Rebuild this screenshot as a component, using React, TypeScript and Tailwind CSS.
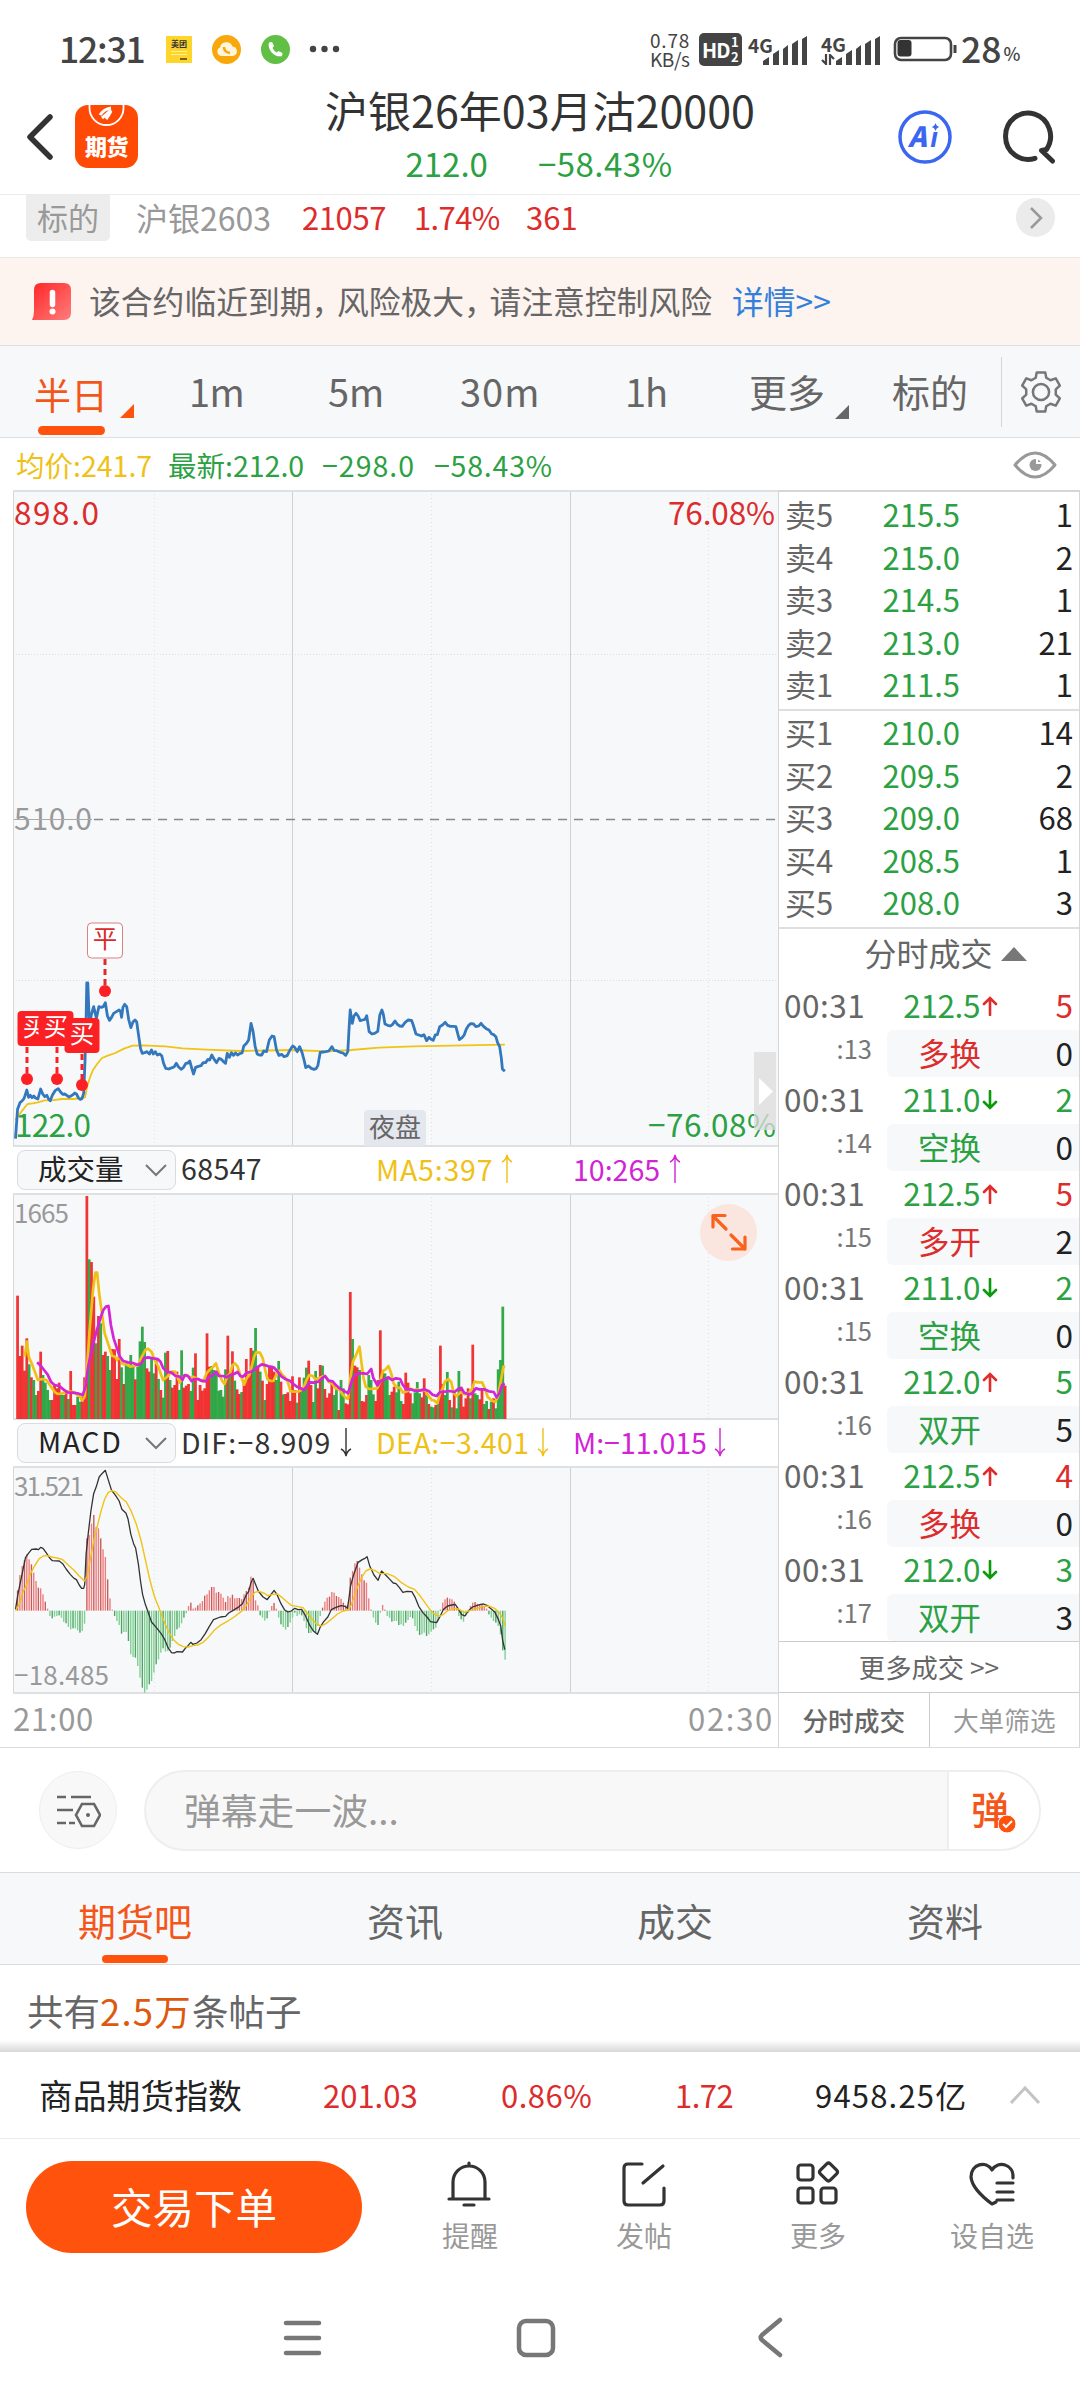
import React from "react";

type Trade = [sec: string, price: string, dir: "up" | "down", qty: string, kind: string, delta: string];

const ASKS = [["卖5", "215.5", "1"], ["卖4", "215.0", "2"], ["卖3", "214.5", "1"], ["卖2", "213.0", "21"], ["卖1", "211.5", "1"]];
const BIDS = [["买1", "210.0", "14"], ["买2", "209.5", "2"], ["买3", "209.0", "68"], ["买4", "208.5", "1"], ["买5", "208.0", "3"]];

const TRADES: Trade[] = [
  [":13", "212.5", "up", "5", "多换", "0"],
  [":14", "211.0", "down", "2", "空换", "0"],
  [":15", "212.5", "up", "5", "多开", "2"],
  [":15", "211.0", "down", "2", "空换", "0"],
  [":16", "212.0", "up", "5", "双开", "5"],
  [":16", "212.5", "up", "4", "多换", "0"],
  [":17", "212.0", "down", "3", "双开", "3"],
];
const QTY_RED = [true, false, true, false, false, true, false];

// Top edge of each one-minute volume bar; the letter is its colour.
const VOLUME =
  "347R 528R 497R 572R 475R 553G 592R 600G 645G 633R 515R 585G 608G 630G 660G 660R 618R 625R 608R 645G 645G 640R 657G 573R 675R 675R 650G 665G 650R 592R 48R 238G 246R 350R 490G 408R 430G 525R 515R 528G 570G 507R 508R 597R 477R 562G 612R 550G 560G 525G 560G 598R 560G 484G 440G 486G 565R 575R 535G 580G 535R 597G 630R 653G 518G 513R 600G 623R 615R 575R 630G 511G 623R 617R 612R 633G 563G 520R 660R 615R 632R 625R 460R 560R 558G 570G 575G 632G 630G 650G 568G 467R 575G 514R 602G 628R 642R 636G 600R 537R 590R 504R 512G 444G 560R 575G 602R 660G 612R 557R 557R 575R 600G 543G 605R 643G 642R 637R 663R 589R 630R 668G 592R 630G 593G 563G 542R 615R 666G 573G 625R 555R 557G 627R 653R 640R 602R 645G 625G 690R 600G 625G 670R 673R 336R 477G 557R 562R 570G 663R 665R 645R 585G 600G 643G 663R 600R 451R 570R 580G 590G 645G 635R 620R 637G 605G 663G 672R 578R 608R 640R 670G 637G 606G 640G 652R 595R 645G 672R 680G 682G 675R 670G 497R 612R 645G 576G 660R 682G 640R 685G 573G 620R 680R 655R 625R 655G 494R 640G 645G 658R 625R 672G 663G 687R 665G 655R 685G 568G 540G 380G 617R".split(" ");

// Free end of each MACD histogram bar; 569 is the zero axis.
const MACD = [
  508, 462, 435, 417, 400, 415, 430, 455, 480, 500, 502, 520, 542, 563, 585, 592, 587, 585, 583, 590, 603, 607, 618, 625, 622, 622, 628, 635, 630, 608,
  352, 342, 308, 282, 318, 322, 352, 385, 408, 475, 532, 566, 585, 600, 612, 638, 633, 633, 660, 700, 708, 710, 735, 770, 800, 815, 806, 790, 780, 755,
  730, 715, 695, 682, 692, 690, 680, 660, 645, 625, 620, 607, 590, 577, 555, 545, 563, 560, 553, 547, 540, 524, 520, 508, 498, 498, 515, 513, 518, 530,
  543, 525, 530, 521, 532, 531, 531, 534, 520, 510, 500, 467, 480, 538, 553, 583, 590, 599, 592, 572, 555, 546, 563, 590, 610, 618, 626, 618, 605, 590,
  575, 585, 580, 583, 600, 622, 636, 636, 630, 635, 615, 585, 560, 542, 530, 527, 513, 515, 525, 528, 533, 545, 553, 550, 470, 450, 427, 420, 440, 460,
  478, 485, 532, 566, 590, 605, 612, 575, 552, 566, 585, 590, 602, 600, 600, 612, 610, 615, 605, 597, 588, 592, 615, 630, 642, 640, 635, 645, 640, 632,
  625, 620, 598, 566, 545, 535, 530, 533, 535, 542, 560, 585, 595, 602, 585, 575, 555, 545, 543, 548, 550, 552, 555, 563, 580, 590, 600, 605, 615, 640,
  688, 716,
];

const PRICE =
  "45,716 51,628 58,608 64,603 70,595 78,570 83,592 88,586 93,593 98,588 103,594 110,597 118,567 124,582 130,590 136,586 141,597 146,602 152,586 160,572 169,566 176,576 182,583 188,582 194,586 200,591 206,588 212,584 217,579 222,582 228,594 233,598 238,596 243,580 247,480 250,360 252,249 255,249 260,385 265,345 272,320 280,355 287,320 294,322 300,320 306,308 312,348 318,361 324,352 330,340 338,335 346,330 350,334 353,352 357,322 362,313 368,320 374,360 380,383 386,366 392,360 397,366 403,410 408,445 413,460 420,458 426,455 434,462 440,450 445,462 451,455 457,465 464,462 470,468 475,490 481,505 490,507 500,503 506,500 512,490 518,500 526,508 533,502 540,490 546,489 551,483 557,505 562,522 568,502 576,499 584,497 590,488 597,488 604,478 609,480 615,465 622,478 629,488 636,475 643,478 650,486 655,490 660,460 666,472 672,458 678,466 684,459 690,465 696,461 703,459 708,438 716,430 722,420 729,370 735,395 741,440 747,462 753,465 760,465 766,453 774,455 782,420 790,408 796,410 803,450 810,466 818,463 825,470 834,467 842,450 850,438 856,442 863,455 870,440 877,457 883,480 888,503 896,498 904,505 912,508 918,506 923,497 930,457 938,456 946,455 955,453 964,440 970,451 978,452 988,457 996,459 1004,466 1010,455 1014,380 1017,330 1023,370 1028,348 1034,340 1040,348 1046,362 1053,360 1060,358 1065,347 1072,395 1080,402 1088,400 1097,394 1103,345 1109,330 1113,342 1118,372 1126,376 1134,378 1140,373 1147,363 1154,373 1161,378 1168,379 1176,368 1185,360 1195,361 1200,375 1208,402 1216,405 1224,408 1231,404 1239,422 1246,412 1252,418 1258,421 1264,405 1270,404 1277,380 1285,375 1293,367 1300,376 1308,379 1316,379 1324,380 1329,400 1334,419 1342,413 1348,405 1354,388 1361,376 1367,371 1375,372 1382,380 1390,378 1397,370 1404,379 1412,386 1420,390 1428,402 1434,404 1440,410 1445,428 1451,440 1456,475 1459,507 1466,514";
const AVERAGE =
  "45,660 55,645 65,631 80,612 95,610 110,607 130,601 150,601 180,597 215,597 247,592 253,560 262,530 270,510 282,492 296,474 315,466 335,459 360,446 385,437 415,436 480,439 530,445 600,449 700,453 850,450 950,454 1020,450 1100,443 1200,439 1350,436 1466,434";
const VOL_MA5 =
  "72,530 78,485 84,532 92,550 100,572 110,600 122,597 135,600 148,620 160,637 168,642 182,640 192,634 205,635 215,636 225,645 232,650 239,662 246,650 253,560 260,455 270,330 277,278 282,278 288,340 296,400 304,460 312,485 320,510 326,528 334,530 340,540 347,528 356,552 368,553 378,560 390,558 400,555 412,530 422,510 430,506 440,515 450,542 460,560 468,585 474,600 486,590 498,575 508,575 515,590 522,608 530,592 542,585 552,594 560,590 570,595 580,600 590,605 600,580 608,570 618,562 627,550 636,580 645,602 652,612 660,590 668,580 675,556 682,550 690,560 698,585 704,600 709,614 716,595 724,585 732,555 738,530 744,517 755,518 763,535 770,570 777,598 786,603 794,603 802,585 812,572 820,585 828,592 836,606 844,634 856,635 868,634 880,628 890,600 898,585 908,588 916,598 926,595 936,590 944,588 954,605 964,610 974,625 985,628 996,645 1006,655 1011,656 1018,590 1025,545 1034,525 1044,500 1050,550 1056,595 1062,620 1072,627 1084,626 1096,625 1104,605 1112,573 1120,568 1128,558 1136,580 1143,610 1152,622 1162,624 1170,638 1182,634 1192,626 1202,630 1212,628 1222,632 1234,630 1244,648 1254,660 1262,662 1270,670 1278,640 1286,625 1292,605 1302,597 1310,605 1318,640 1326,648 1338,637 1350,643 1362,638 1370,628 1378,605 1388,607 1400,607 1408,625 1416,650 1426,660 1438,666 1446,650 1455,600 1462,560 1467,560";
const VOL_MA10 =
  "108,547 118,557 128,570 138,583 148,605 158,615 172,618 184,628 196,637 210,638 225,640 240,645 248,622 256,560 264,520 272,485 280,455 290,420 300,390 308,380 315,378 322,435 330,475 338,500 348,530 358,543 372,547 386,549 400,555 410,550 418,535 430,532 445,535 458,537 466,545 474,565 485,575 498,578 510,588 522,590 530,600 536,585 546,588 556,603 566,597 575,597 585,602 598,604 606,592 618,586 628,575 636,588 648,588 658,592 668,585 680,582 690,576 698,588 706,590 716,578 728,576 738,570 750,560 760,553 772,556 782,560 796,563 806,575 818,590 830,598 842,602 852,612 862,620 872,624 882,630 892,618 900,607 912,608 924,605 934,596 944,588 954,602 966,604 976,616 986,625 998,632 1011,640 1018,615 1024,595 1034,583 1044,580 1056,580 1066,582 1078,567 1084,594 1096,616 1106,602 1118,598 1128,592 1138,600 1150,595 1162,597 1170,615 1180,628 1192,628 1204,632 1218,632 1232,628 1246,634 1256,644 1268,648 1278,636 1292,635 1306,633 1320,636 1332,626 1340,625 1348,638 1362,643 1372,640 1382,625 1392,628 1406,628 1420,634 1434,636 1442,652 1450,640 1458,615 1466,612";
const DIF =
  "45,565 52,520 60,480 68,440 74,410 82,398 92,385 105,384 112,386 118,379 125,382 134,395 145,412 152,419 172,420 182,428 192,444 204,460 215,472 222,476 230,492 237,502 243,502 246,490 250,400 256,340 264,270 272,218 280,196 288,168 296,158 306,148 314,175 324,208 336,224 346,240 354,265 366,277 372,295 380,340 388,368 394,382 402,430 408,480 414,520 422,550 430,573 440,603 456,622 468,638 478,655 488,680 498,695 506,696 514,692 530,693 538,682 546,674 554,664 560,670 572,666 584,656 596,638 608,616 620,596 640,588 655,586 664,576 676,569 690,560 704,548 716,520 722,512 729,485 735,472 742,490 750,510 764,528 776,536 786,522 796,508 804,520 816,548 826,566 836,573 846,570 856,562 866,566 876,565 886,582 898,610 910,630 922,640 930,618 940,602 952,588 962,566 974,560 990,554 1002,556 1009,562 1013,535 1018,495 1028,458 1040,424 1052,416 1060,412 1066,407 1074,436 1086,462 1098,478 1108,450 1120,462 1132,475 1142,486 1150,488 1160,500 1170,514 1182,511 1196,512 1206,530 1216,556 1228,575 1240,588 1250,602 1268,605 1276,590 1288,565 1300,555 1312,552 1322,550 1330,562 1340,580 1350,585 1360,570 1372,558 1384,554 1396,550 1404,549 1416,554 1424,562 1436,572 1446,592 1454,614 1460,660 1466,686";
const DEA =
  "45,569 56,550 66,515 78,490 90,455 102,432 114,413 126,405 138,404 150,408 166,411 182,416 198,432 215,448 230,465 245,480 254,465 264,405 274,350 284,310 294,268 304,234 314,215 324,209 336,213 352,230 366,242 380,268 396,310 410,360 424,425 436,480 448,525 462,562 476,600 490,634 504,656 518,670 532,677 546,678 560,674 574,672 590,664 606,648 622,628 638,614 660,601 680,588 700,572 714,556 728,530 740,514 752,511 766,516 778,524 792,520 806,519 820,530 834,543 846,553 862,556 880,560 892,576 906,594 920,610 934,615 948,607 964,593 980,579 996,570 1012,567 1020,552 1028,528 1038,498 1050,470 1062,450 1074,444 1088,448 1104,458 1124,458 1146,467 1166,485 1186,498 1204,505 1218,522 1232,542 1248,565 1262,580 1276,586 1288,580 1302,568 1318,562 1332,564 1348,574 1364,569 1382,564 1400,556 1420,555 1436,562 1450,575 1460,592 1467,614";

const SX = 0.34435;
const SY = 1 / 3;

function Grid({ h, rows = [] as number[] }: { h: number; rows?: number[] }) {
  return (
    <g fill="none" shapeRendering="crispEdges">
      <rect x="0" y="0" width="765" height={h} fill="#f7f8fa" />
      {[141, 418, 695].map((x) => <path key={x} d={`M${x} 0V${h}`} stroke="#e0e1e3" strokeDasharray="1 3" />)}
      {rows.map((y) => <path key={y} d={`M0 ${y}H765`} stroke="#dcdddf" strokeDasharray="1 2" />)}
      {[279.5, 557].map((x) => <path key={x} d={`M${x} 0V${h}`} stroke="#cfd0d2" />)}
      <path d={`M0.5 0V${h}`} stroke="#d6d7d9" />
      <path d={`M0 1H765 M0 ${h - 1}H765`} stroke="#dfe0e1" strokeWidth="2" />
    </g>
  );
}

function Line({ points, color, w }: { points: string; color: string; w: number }) {
  return <polyline points={points} fill="none" stroke={color} strokeWidth={w} strokeLinejoin="round" vectorEffect="non-scaling-stroke" />;
}

function Marker({ x, box = x, top, dot, label, hollow }: { x: number; box?: number; top: number; dot: number; label: string; hollow?: boolean }) {
  return (
    <g>
      <path d={`M${x} ${top + 36}V${dot}`} stroke={hollow ? "#e02b2b" : "#fb2024"} strokeWidth="3" strokeDasharray="6 4" />
      <circle cx={x} cy={dot} r="6" fill="#fb2024" />
      <rect x={box - 17.5} y={top} width="35" height="35" rx="4" fill={hollow ? "#fff" : "#fb2024"} stroke={hollow ? "#d98080" : "none"} />
      <text x={box} y={top + 25} textAnchor="middle" fontSize="24.500" fill={hollow ? "#d92b2b" : "#fff"}>{label}</text>
    </g>
  );
}

function PriceChart() {
  return (
    <svg width="765" height="657" className="block overflow-visible">
      <Grid h={657} rows={[164, 490]} />
      <path d="M81 329.5H765" stroke="#888" strokeWidth="1.4" strokeDasharray="9 7" />
      <text x="1" y="340" fontSize="30" fill="#999" textLength="78">510.0</text>
      <path d="M1 329.5H79" stroke="#aaa" strokeWidth="1.2" />
      <rect x="351" y="620" width="62" height="36" rx="4" fill="#e4e7ee" />
      <text x="356" y="647" fontSize="26" fill="#666">夜盘</text>
      <g transform={`translate(-13 410) scale(${SX} ${SY})`}>
        <Line points={AVERAGE} color="#f0c314" w={1.8} />
        <Line points={PRICE} color="#3377bd" w={2.8} />
      </g>
      <text x="1" y="35" fontSize="31.500" fill="#dc2c2c" textLength="85">898.0</text>
      <text x="655" y="35" fontSize="31.500" fill="#dc2c2c" textLength="107">76.08%</text>
      <text x="2" y="647" fontSize="31.500" fill="#2ba143" textLength="76">122.0</text>
      <text x="635" y="647" fontSize="31.500" fill="#2ba143" textLength="128">−76.08%</text>
      <Marker x={14} box={22} top={521} dot={589} label="买" />
      <Marker x={44} box={43} top={521} dot={589} label="买" />
      <Marker x={69} top={528} dot={595} label="买" />
      <Marker x={92} top={433} dot={501} label="平" hollow />
      <rect x="741" y="562" width="22" height="78" fill="#dcdcdc" fillOpacity="0.75" />
      <path d="M746 588v27l14-13.500z" fill="#fff" />
    </svg>
  );
}

function VolumeChart() {
  return (
    <svg width="765" height="227" className="block overflow-visible">
      <Grid h={227} />
      <text x="1" y="30" fontSize="26" fill="#999" textLength="55">1665</text>
      <g transform={`translate(-13 -13) scale(${SX} ${SY})`}>
        {VOLUME.map((v, i) => {
          const y = parseInt(v, 10);
          return <rect key={i} x={47 + 6.71 * i} y={y} width="8" height={717 - y} fill={v.endsWith("R") ? "#f02626" : "#24a23c"} fillOpacity="0.93" />;
        })}
        <Line points={VOL_MA5} color="#efc116" w={2.7} />
        <Line points={VOL_MA10} color="#d224d8" w={2.7} />
      </g>
      <circle cx="715.500" cy="39.500" r="28.500" fill="#fae5df" />
      <g stroke="#f9611c" strokeWidth="3.200" fill="none" strokeLinecap="round" strokeLinejoin="round">
        <path d="M713 36L700 23M712 22.500H700V34M718 42L732 56M719.500 56H732V44" />
      </g>
    </svg>
  );
}

function MacdChart() {
  return (
    <svg width="765" height="228" className="block overflow-visible">
      <Grid h={228} />
      <text x="1" y="30" fontSize="26" fill="#999" textLength="70">31.521</text>
      <text x="1" y="219" fontSize="26" fill="#999" textLength="95">−18.485</text>
      <g transform={`translate(-13 -45) scale(${SX} ${SY})`}>
        {MACD.map((y, i) => (
          <rect key={i} x={49 + 6.71 * i} y={Math.min(y, 569)} width="4" height={Math.abs(y - 569)} fill={y < 569 ? (i % 3 ? "#ee7b7b" : "#c95a5a") : i % 3 ? "#7fcf92" : "#4ba562"} />
        ))}
        <Line points={DIF} color="#333" w={1.3} />
        <Line points={DEA} color="#f0c314" w={1.4} />
      </g>
    </svg>
  );
}

function LongArrow({ down }: { down?: boolean }) {
  return (
    <svg width="12" height="30" viewBox="0 0 12 30" fill="none" stroke="currentColor" strokeWidth="1.400" className={down ? "rotate-180" : ""}>
      <path d="M6 29V2M1 8Q5 6 6 1Q7 6 11 8" />
    </svg>
  );
}

function Picker({ label, className }: { label: string; className: string }) {
  return (
    <div className="ml-[4px] flex h-[40px] w-[159px] items-center justify-between rounded-[8px] border border-[#d9dbe0] bg-[#f7f8fa] pr-[8px] pl-[20px] leading-[38px] text-[#222]">
      <span className={className}>{label}</span>
      <svg width="22" height="14" fill="none" stroke="#777" strokeWidth="2"><path d="M1 2l10 10L21 2" /></svg>
    </div>
  );
}

function Book({ rows, pad }: { rows: string[][]; pad: string }) {
  return (
    <div className={`border-b-2 border-[#dfdfdf] ${pad}`}>
      {rows.map(([n, p, q]) => (
        <div key={n} className="flex h-[42.500px] items-center pr-[6px] pb-[4px] pl-[6px] text-[30px] leading-[38px]">
          <span className="w-[55px] text-[31px] text-[#666]">{n}</span>
          <span className="w-[120px] text-right text-[31px] text-[#2ba143]">{p}</span>
          <span className="flex-1 text-right text-[31px] text-[#222]">{q}</span>
        </div>
      ))}
    </div>
  );
}

function TradeRow({ t, i }: { t: Trade; i: number }) {
  const [sec, price, dir, qty, kind, delta] = t;
  const up = dir === "up";
  return (
    <div>
      <div className="flex h-[47px] items-center pr-[6px] pb-[5px] pl-[5px] text-[31.500px] leading-[42px]">
        <span className="w-[82px] tracking-[0.5px] text-[#666]">00:31</span>
        <span className="w-[114px] text-right tracking-[-0.4px] text-[#2ba143]">{price}</span>
        <svg width="16" height="20" viewBox="0 0 16 20" fill="none" stroke={up ? "#e02b2b" : "#0b9a0b"} strokeWidth="2.600" className={up ? "mt-[3px] ml-[2px]" : "mt-[3px] ml-[2px] rotate-180"}>
          <path d="M8 19V3M2 8l6-6 6 6" strokeLinecap="round" />
        </svg>
        <span className={`flex-1 text-right ${QTY_RED[i] ? "text-[#dc2c2c]" : "text-[#2ba143]"}`}>{qty}</span>
      </div>
      <div className="flex h-[47px]">
        <span className="w-[108px] pr-[15px] text-right text-[25.500px] leading-[35px] text-[#777]">{sec}</span>
        <div className="flex flex-1 items-center justify-between rounded-l-[6px] bg-[#f7f8fa] pr-[6px] pb-[4px] pl-[31px] text-[31.500px] leading-[42px]">
          <span className={kind.startsWith("多") ? "text-[#dc2c2c]" : "text-[#2ba143]"}>{kind}</span>
          <span className="text-[#222]">{delta}</span>
        </div>
      </div>
    </div>
  );
}

function Signal() {
  return (
    <svg width="44" height="29" fill="#444">
      <path d="M0 28V25L6 21V29H0zM10 18l6-4V29H10zM20 13l5-4V29H20zM29 8l6-4V29H29zM39 3l5-3V29H39z" />
    </svg>
  );
}

function StatusBar() {
  return (
    <div className="flex h-[98px] items-center pl-[59px] text-[#444]">
      <span className="w-[107px] pb-[3px] text-[35.500px] font-medium tracking-[-1.200px]">12:31</span>
      <div className="flex h-[27px] w-[26px] flex-col items-center bg-[#fed52b] pt-[2px] text-[8px] leading-[12px] font-bold text-[#333]">
        美团
        <span className="mt-px h-px w-[16px] bg-[#fff0a0]" />
        <span className="mt-[2px] h-px w-[16px] bg-[#fff0a0]" />
        <span className="mt-[3px] ml-[9px] h-[2px] w-[7px] bg-[#7a6414]" />
      </div>
      <svg width="29" height="29" viewBox="0 0 29 29" className="ml-[20px]">
        <circle cx="14.500" cy="14.500" r="14.500" fill="#f9a80c" />
        <path d="M9 21a4.500 4.500 0 0 1-1-8.500 6.500 6.500 0 0 1 12.500-1A4.800 4.800 0 0 1 21 21z" fill="#fff5dc" />
        <path d="M12 12q0 5 6 6" stroke="#f9a80c" strokeWidth="2.500" fill="none" />
      </svg>
      <svg width="29" height="29" viewBox="0 0 29 29" className="ml-[20px]">
        <circle cx="14.500" cy="14.500" r="14.500" fill="#62bf45" />
        <path d="M8 7.500l3-.5 2 4-1.500 2q1.500 3 4 4.500l2-1.500 4 2-.5 3.200q-6.500 1-10.500-4T8 7.500z" fill="#fff" />
      </svg>
      <svg width="31" height="8" className="ml-[19px]" fill="#444"><circle cx="4" cy="4" r="3.200" /><circle cx="15.500" cy="4" r="3.200" /><circle cx="27" cy="4" r="3.200" /></svg>
      <div className="ml-[310px] w-[49px] text-[19px] leading-[19px]">
        <div className="tracking-[0.8px]">0.78</div>
        <div className="tracking-[-0.4px]">KB/s</div>
      </div>
      <div className="flex h-[33px] w-[43px] items-center rounded-[5px] bg-[#444] pl-[3px] text-white">
        <span className="w-[29px] text-[20px] leading-[33px] font-bold tracking-[-1px]">HD</span>
        <span className="flex flex-col text-[13px] leading-[15px] font-bold"><span>1</span><span>2</span></span>
      </div>
      <div className="ml-[6px] flex items-end">
        <span className="mb-[9px] w-[15px] text-[19px] leading-[22px] font-bold whitespace-nowrap">4G</span>
        <Signal />
      </div>
      <div className="ml-[14px] flex items-end">
        <div className="flex w-[15px] flex-col">
          <span className="text-[19px] leading-[20px] font-bold whitespace-nowrap">4G</span>
          <svg width="14" height="11" fill="none" stroke="#444" strokeWidth="2.200"><path d="M5 0V10L1 6M9 11V1L13 5" /></svg>
        </div>
        <Signal />
      </div>
      <svg width="65" height="27" className="ml-[13px]" fill="none" stroke="#444" strokeWidth="2.600">
        <rect x="2" y="2" width="56" height="22" rx="6" />
        <rect x="4.500" y="4" width="14" height="16.500" rx="3" fill="#333" stroke="none" />
        <path d="M62 9v8" strokeWidth="3" />
      </svg>
      <span className="ml-[3px] pb-[3px] text-[35.500px] font-medium">28</span>
      <span className="mt-[8px] ml-[2px] text-[18px] font-medium">%</span>
    </div>
  );
}

function Header() {
  return (
    <div className="flex h-[97px] items-start border-b border-[#ebebeb]">
      <div className="flex w-[310px] items-center pt-[7px] pl-[26px]">
        <svg width="29" height="48" fill="none" stroke="#333" strokeWidth="5.500" strokeLinecap="round" strokeLinejoin="round" className="mt-[1px]"><path d="M24 4L4 24l20 20" /></svg>
        <div className="ml-[20px] flex h-[63px] w-[63px] flex-col items-center rounded-[13px] bg-[#ff4a05]">
          <svg width="37" height="24" fill="none" stroke="#fff"><path d="M1.500 0v3a17 17 0 0 0 34 0V0" strokeWidth="1.800" /><path d="M12 10q4-6 11-7M14 13q5-4 9-8M18 14q3-4 5-8" strokeWidth="3" /></svg>
          <span className="text-[22px] leading-[32px] font-black tracking-[-0.5px] text-white">期货</span>
        </div>
      </div>
      <div className="flex w-[460px] flex-col items-center">
        <h1 className="h-[44px] text-[43px] leading-[22px] whitespace-nowrap text-[#333]">沪银26年03月沽20000</h1>
        <div className="flex h-[46px] gap-[50px] pr-[2px] text-[33px] leading-[42px] text-[#2ba143]"><span>212.0</span><span className="tracking-[0.500px]">−58.43%</span></div>
      </div>
      <div className="ml-[128px] flex items-center pt-[12px]">
        <svg width="54" height="54" viewBox="0 0 54 54">
          <circle cx="27" cy="27" r="25" fill="none" stroke="#3b66f0" strokeWidth="3.500" />
          <text x="10" y="37" fontSize="28" fontWeight="900" fontStyle="italic" fill="#3b66f0" textLength="30">Aı</text>
          <path d="M37.500 13q1 3.500 4 4-3 .5-4 4-1-3.500-4-4 3-.5 4-4z" fill="#3b66f0" />
        </svg>
        <svg width="54" height="54" className="ml-[51px]" fill="none" stroke="#333" strokeWidth="5" strokeLinecap="round" strokeLinejoin="round">
          <path d="M32 48.300A22.500 23.200 0 1 1 43.500 39.500L38.500 40.500L49.500 51" />
        </svg>
      </div>
    </div>
  );
}

function GearIcon() {
  return (
    <svg width="40" height="42" viewBox="0 0 42 44" fill="none" stroke="#777" strokeWidth="2.600" strokeLinejoin="round">
      <path d="M16.500 1.500h9l1 5.500 4.500 2.700 5.500-2 4.300 7.500-4.300 4v5.600l4.300 4-4.300 7.500-5.500-2-4.500 2.700-1 5.500h-9l-1-5.500-4.500-2.700-5.500 2L1.200 28.800l4.300-4v-5.600l-4.300-4L5.500 7.700l5.500 2L15.500 7z" />
      <circle cx="21" cy="22" r="8.500" />
    </svg>
  );
}

function PeriodTabs() {
  return (
    <div className="flex h-[93px] items-center border-y border-[#dddee2] bg-[#f7f8fa] text-[38px] text-[#666]">
      <div className="flex h-full w-[189px] pl-[34px]">
        <div className="flex w-[74px] flex-col items-center justify-end pb-[2px] text-[#f4561a]">
          <span className="mb-[4px] text-[37px] leading-[56px]">半日</span>
          <span className="h-[9px] w-[67px] rounded-full bg-[#ff530d]" />
        </div>
        <svg width="14" height="14" className="mt-[58px] ml-[12px]"><path d="M14 0V14H0z" fill="#ff530d" /></svg>
      </div>
      <span className="w-[139px] pb-[2px] tracking-[-0.5px]">1m</span>
      <span className="w-[132px] pb-[2px]">5m</span>
      <span className="w-[165px] pb-[2px] tracking-[1px]">30m</span>
      <span className="w-[124px] pb-[2px] tracking-[-1px]">1h</span>
      <span className="w-[86px] pb-[2px]">更多</span>
      <svg width="14" height="14" className="mt-[40px]"><path d="M14 0V14H0z" fill="#666" /></svg>
      <span className="ml-[43px] w-[109px] pb-[2px]">标的</span>
      <span className="mr-[19px] h-[70px] w-px bg-[#d5d6d9]" />
      <GearIcon />
    </div>
  );
}

function ChatRow() {
  return (
    <div className="flex h-[125px] items-center border-b border-[#dcdcdc] pl-[39px]">
      <div className="flex size-[78px] items-center justify-center rounded-full border border-[#eee] bg-[#f8f8f8]">
        <svg width="46" height="36" fill="none" stroke="#666" strokeWidth="2.600">
          <path d="M2 5h9M16 5h20M2 18h16M2 31h9M14 31h6M27 12h12l6 11-6 11H27l-6-11z" />
          <circle cx="33" cy="23" r="2" fill="#666" stroke="none" />
        </svg>
      </div>
      <div className="ml-[27px] flex h-[81px] w-[897px] overflow-hidden rounded-full border-2 border-[#eee] bg-[#f8f8f8]">
        <span className="w-[801px] pl-[38px] text-[36.800px] leading-[74px] text-[#999]">弹幕走一波...</span>
        <div className="flex flex-1 items-center border-l-2 border-[#eee] bg-white pb-[4px] pl-[22px]">
          <div className="relative text-[38px] leading-[44px] font-medium text-[#f4561a]">
            弹
            <svg width="18" height="18" className="absolute right-[-7px] bottom-[-3px]"><circle cx="9" cy="9" r="9" fill="#ff530d" stroke="#fff" /><path d="M5 9l3 3 6-6" fill="none" stroke="#fff" strokeWidth="2" /></svg>
          </div>
        </div>
      </div>
    </div>
  );
}

const ICONS: [string, React.ReactNode][] = [
  ["提醒", <path d="M22 2v3M6 38V21a16 16 0 0 1 32 0V38M2 38h40M17 44h10" />],
  ["发帖", <path d="M21 3H7q-4 0-4 4v33q0 4 4 4h32q4 0 4-4V27M22 22L42 5" />],
  ["更多", <><rect x="3" y="4" width="15" height="15" rx="3" /><rect x="3" y="27" width="15" height="15" rx="3" /><rect x="26" y="27" width="15" height="15" rx="3" /><rect x="26.500" y="4" width="14" height="14" rx="2.500" transform="rotate(45 33.500 11)" /></>],
  ["设自选", <path d="M27 41l-4 2Q3 28 2 16C2 3 17-1 23 9c6-10 22-6 21 8M28 22h16M28 31h16M28 39h16" strokeLinejoin="round" />],
];

export default function App() {
  return (
    <div lang="zh-CN" className="h-[2400px] w-[1080px] overflow-hidden bg-white font-['Noto_Sans_CJK_SC',sans-serif]">
      <StatusBar />
      <Header />

      <div className="flex h-[62px] items-start text-[31px] leading-[44px] text-[#dc2c2c]">
        <span className="ml-[26px] h-[46px] w-[84px] rounded-b-[5px] bg-[#ededed] text-center text-[#999]">标的</span>
        <span className="ml-[26px] w-[166px] text-[32px] text-[#999]">沪银2603</span>
        <span className="w-[112px] tracking-[-0.4px]">21057</span>
        <span className="w-[112px] tracking-[-0.6px]">1.74%</span>
        <span className="w-[490px]">361</span>
        <span className="mt-[3px] flex size-[39px] items-center justify-center rounded-full bg-[#ebebeb]">
          <svg width="14" height="22" fill="none" stroke="#999" strokeWidth="2.500"><path d="M2 1l10 10L2 21" /></svg>
        </span>
      </div>

      <div className="flex h-[88px] items-center border-t border-[#ece6e4] bg-[#fdf3ef] pl-[32px] text-[31.800px] text-[#666]">
        <svg width="39" height="38">
          <defs><linearGradient id="warn" x1="0" y1="0" x2="1" y2="1"><stop stopColor="#ff2525" /><stop offset="1" stopColor="#ff7d7d" /></linearGradient></defs>
          <path d="M2 7q0-7 7-7h23q7 0 7 7v23q0 7-7 7H0q2-4 2-9z" fill="url(#warn)" />
          <path d="M20.500 9.500v12" stroke="#fff" strokeWidth="5.500" strokeLinecap="round" /><circle cx="20.500" cy="28.500" r="3" fill="#fff" />
        </svg>
        <span className="ml-[18px] w-[643px] pb-[1px] whitespace-nowrap">该合约临近到期<span className="tracking-[-6.500px]">，</span>风险极大<span className="tracking-[-6.500px]">，</span>请注意控制风险</span>
        <span className="pb-[1px] text-[#3380dc]">详情&gt;&gt;</span>
      </div>

      <PeriodTabs />

      <div className="flex h-[52px] items-center pl-[16px] text-[28.500px] text-[#2ba143]">
        <span className="w-[152px] pt-[3px] text-[#efc116]">均价:241.7</span>
        <span className="w-[154px] pt-[3px]">最新:212.0</span>
        <span className="w-[112px] pt-[3px] tracking-[1px]">−298.0</span>
        <span className="pt-[3px] tracking-[0.8px]">−58.43%</span>
        <svg width="44" height="28" className="mt-[1px] mr-[23px] ml-auto" fill="none" stroke="#999" strokeWidth="3">
          <path d="M2 14Q22-10 42 14Q22 38 2 14z" strokeLinejoin="round" /><circle cx="22.500" cy="14" r="6" fill="#999" stroke="none" /><path d="M24 7v5h6" stroke="#fff" strokeWidth="2" />
        </svg>
      </div>

      <div className="flex h-[1258px] border-b border-[#dcdcdc]">
        <div className="ml-[13px] w-[765px]">
          <PriceChart />
          <div className="grid h-[46px] grid-cols-[168px_195px_197px_1fr] items-center text-[28.500px] leading-[38px] text-[#333]">
            <Picker label="成交量" className="pb-[4px] text-[28.500px]" />
            <span className="pb-[4px] tracking-[0.4px]">68547</span>
            <span className="flex items-center gap-[8px] pb-[3px] tracking-[0.8px] text-[#efc116]">MA5:397<LongArrow /></span>
            <span className="flex items-center gap-[9px] pb-[3px] text-[#d024d6]">10:265<LongArrow /></span>
          </div>
          <VolumeChart />
          <div className="grid h-[46px] grid-cols-[168px_195px_197px_1fr] items-center text-[28.500px] leading-[38px] text-[#333]">
            <Picker label="MACD" className="pb-[4px] text-[28.500px] tracking-[1.600px]" />
            <span className="flex items-center gap-[8px] pb-[3px] tracking-[1.200px]">DIF:−8.909<LongArrow down /></span>
            <span className="flex items-center gap-[7px] pb-[3px] tracking-[0.500px] text-[#efc116]">DEA:−3.401<LongArrow down /></span>
            <span className="flex items-center gap-[7px] pb-[3px] text-[#d024d6]">M:−11.015<LongArrow down /></span>
          </div>
          <MacdChart />
          <div className="flex h-[53px] items-center justify-between pr-[4px] pb-[4px] text-[31px] text-[#999]"><span className="tracking-[0.700px]">21:00</span><span className="tracking-[1.700px]">02:30</span></div>
        </div>

        <div className="flex h-[1257px] w-[302px] flex-col border-x border-t-2 border-[#d6d6d6]">
          <Book rows={ASKS} pad="h-[219px] pt-[3px]" />
          <Book rows={BIDS} pad="h-[218px] pt-[2px]" />
          <div className="flex h-[54px] items-center justify-center gap-[8px] pb-[8px] pl-[33px] text-[32px] leading-[44px] text-[#666]">
            分时成交
            <svg width="26" height="14" className="mt-[4px]"><path d="M13 0L26 14H0z" fill="#777" /></svg>
          </div>
          {TRADES.map((t, i) => <TradeRow key={i} t={t} i={i} />)}
          <div className="flex h-[52px] items-center justify-center border-y border-[#ccc] pb-[1px] text-[26.300px] text-[#666]">更多成交 &gt;&gt;</div>
          <div className="flex flex-1 items-center text-center text-[25.700px] leading-[54px]">
            <span className="flex-1 border-r border-[#ccc] font-medium text-[#666]">分时成交</span>
            <span className="flex-1 text-[#999]">大单筛选</span>
          </div>
        </div>
      </div>

      <ChatRow />

      <div className="grid h-[92px] grid-cols-4 border-b border-[#dcdcdc] bg-[#f7f8fa] text-center text-[38px] leading-[93px] text-[#666]">
        {["期货吧", "资讯", "成交", "资料"].map((t, i) => (
          <div key={t} className={i === 0 ? "flex flex-col items-center text-[#f4561a]" : ""}>
            {i === 0 ? <><span className="h-[82px]">{t}</span><span className="h-[8px] w-[66px] rounded-full bg-[#ff530d]" /></> : t}
          </div>
        ))}
      </div>

      <div className="h-[75px] pl-[27px] text-[36.500px] leading-[91px] text-[#666]">
        共有<span className="tracking-[1.200px] text-[#dc5a10]">2.5万</span>条帖子
      </div>
      <div className="h-[12px] bg-gradient-to-b from-white to-[#d8d8d8]" />

      <div className="flex h-[87px] items-center border-b border-[#ebebeb] pl-[39px] text-[31px] text-[#dc2c2c]">
        <span className="w-[284px] text-[33.800px] text-[#222]">商品期货指数</span>
        <span className="w-[178px]">201.03</span>
        <span className="w-[174px] tracking-[0.500px]">0.86%</span>
        <span className="w-[140px] tracking-[-0.500px]">1.72</span>
        <span className="w-[195px] tracking-[1.200px] text-[#222]">9458.25亿</span>
        <svg width="30" height="20" fill="none" stroke="#c4c4c4" strokeWidth="3"><path d="M1 18L15 3l14 15" /></svg>
      </div>

      <div className="flex h-[136px] items-start pt-[22px] pl-[26px]">
        <button className="h-[92px] w-[336px] rounded-full bg-[#ff530d] pb-[2px] text-[41.500px] text-white">交易下单</button>
        <div className="ml-[21px] flex">
          {ICONS.map(([label, icon]) => (
            <div key={label} className="flex w-[174px] flex-col items-center">
              <svg width="46" height="48" viewBox="0 0 46 48" fill="none" stroke="#333" strokeWidth="3.200" strokeLinecap="round">{icon}</svg>
              <span className="mt-[5px] text-[28px] leading-[42px] text-[#999]">{label}</span>
            </div>
          ))}
        </div>
      </div>

      <div className="flex h-[125px] items-center pt-[1px] pl-[283px]">
        <svg width="39" height="38" stroke="#777" strokeWidth="4.500" strokeLinecap="round"><path d="M3 4h33M3 19h33M3 34h33" /></svg>
        <svg width="40" height="40" className="ml-[194px]" fill="none" stroke="#777" strokeWidth="4.500"><rect x="3" y="3" width="34" height="34" rx="7" /></svg>
        <svg width="26" height="42" className="ml-[201px]" fill="none" stroke="#777" strokeWidth="4.500" strokeLinecap="round"><path d="M23 3L5 18q-2.500 2.500 0 5L23 38" /></svg>
      </div>
    </div>
  );
}
